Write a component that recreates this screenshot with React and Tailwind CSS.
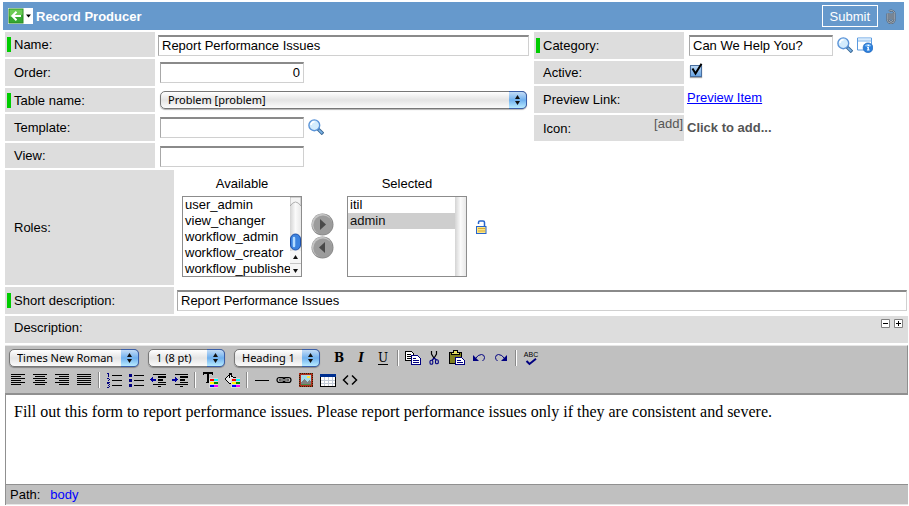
import React from "react";

const INPUT =
  "h-[21px] min-w-0 border border-t-2 border-[#d0d0d0] border-t-[#8a8a8a] border-l-[#a8a8a8] bg-white px-[3px] pb-px leading-4 text-black outline-none";

function FieldLabel({ htmlFor, required, children, className = "" }) {
  return (
    <div className={`flex shrink-0 items-center bg-[#dddddd] ${className}`}>
      {required ? (
        <span className="ml-0.5 mr-[3px] h-[15px] w-1 bg-[#00cc00]" />
      ) : (
        <span className="w-[9px]" />
      )}
      <label htmlFor={htmlFor}>{children}</label>
    </div>
  );
}

function Row({ id, label, required, height, children, className = "" }) {
  return (
    <div className={`flex ${height}`}>
      <FieldLabel htmlFor={id} required={required} className="w-[150px]">
        {label}
      </FieldLabel>
      <div className={`flex min-w-0 flex-1 items-start ${className}`}>{children}</div>
    </div>
  );
}

function PopupSelect({ id, label, options, className = "" }) {
  return (
    <div className={`relative h-[18px] ${className}`}>
      <select
        id={id}
        aria-label={label}
        className="block h-[18px] w-full appearance-none rounded-[5px] border border-[#777] bg-linear-to-b from-[#ffffff] via-[#e4e4e4] to-[#fbfbfb] pl-[7px] pr-5 font-['Noto_Sans',sans-serif] text-[11px] leading-4 text-black shadow-[0_1px_1px_rgba(0,0,0,0.3)] outline-none"
      >
        {options.map((o) => (
          <option key={o}>{o}</option>
        ))}
      </select>
      <span className="pointer-events-none absolute right-0 top-0 flex h-[18px] w-[18px] items-center justify-center rounded-r-[5px] border border-l-0 border-[#3a5ea8] bg-linear-to-b from-[#c3dcf6] via-[#6fb0ee] to-[#b9ecff]">
        <svg width="7" height="10" viewBox="0 0 7 10">
          <path d="M3.5 0L6 4H1zM3.5 10L6 6H1z" fill="#111" />
        </svg>
      </span>
    </div>
  );
}

function Magnifier() {
  return (
    <svg width="16" height="16" viewBox="0 0 16 16">
      <path d="M10 10l5 5" stroke="#35638f" strokeWidth="3.4" />
      <path d="M10.8 10.8l3.6 3.6" stroke="#7db3e6" strokeWidth="1.8" />
      <circle cx="6.3" cy="6.3" r="5.4" fill="#d3ecfd" stroke="#5b94d8" strokeWidth="1.4" />
      <path d="M3 6a3.5 3.5 0 0 1 3.6-3.2" fill="none" stroke="#fff" strokeWidth="1.6" />
    </svg>
  );
}

function InfoWindow() {
  return (
    <svg width="16" height="16" viewBox="0 0 16 16">
      <path d="M.5 1h14v12H.5z" fill="#fff" />
      <path d="M7 13H.5V1h14v6" fill="none" stroke="#5b9be0" />
      <path d="M1 1.500h13v2H1z" fill="#d6eafd" />
      <path d="M1 4h13.500" stroke="#7db3ec" />
      <circle cx="11" cy="10.800" r="4.900" fill="#2b7fdc" stroke="#1b5fb4" strokeWidth=".6" />
      <path d="M7.500 9a4 4 0 0 1 7 0q-3.500 1.500-7 0z" fill="#7fbcf5" />
      <path d="M10.600 7.700h1.600v1.400h-1.600zM10 9.900h1.900v2.700h.7v.9H9.900v-.9h.7v-1.800H10z" fill="#fff" />
    </svg>
  );
}

function Paperclip() {
  return (
    <svg width="10" height="15" viewBox="0 0 10 15" fill="none">
      <path
        d="M7 4v6.500a2 2 0 0 1-4 0V4M5 4.500v6M1.300 4.500v6a3.700 3.700 0 0 0 7.400 0V4.500a3.500 3.200 0 0 0-5.700-2.300"
        stroke="#4f5f70"
        strokeWidth="1.900"
      />
      <path
        d="M7 4v6.500a2 2 0 0 1-4 0V4M5 4.500v6M1.300 4.500v6a3.700 3.700 0 0 0 7.400 0V4.500a3.500 3.200 0 0 0-5.700-2.300"
        stroke="#c3cad2"
        strokeWidth=".7"
      />
    </svg>
  );
}

function Padlock() {
  return (
    <svg width="11" height="14" viewBox="0 0 11 14" fill="none">
      <path d="M2.500 4V2.500a1.500 1.500 0 0 1 1.500-1.500h3a1.500 1.500 0 0 1 1.500 1.500V7" stroke="#2765cc" strokeWidth="1.500" />
      <rect x=".5" y="6.500" width="9.500" height="7" fill="#ffe680" stroke="#2765cc" />
      <path d="M2 8.500h7M2 11h7" stroke="#d3a83a" />
    </svg>
  );
}

function MoveButton({ label, d }) {
  return (
    <button type="button" aria-label={label} className="block">
      <svg width="23" height="23" viewBox="0 0 23 23">
        <circle cx="11.500" cy="11.500" r="11" fill="#8b8b8b" />
        <circle cx="11" cy="11" r="10.200" fill="#c4c4c4" />
        <circle cx="12" cy="12" r="9.600" fill="#9c9c9c" />
        <path d={d} fill="#4a4a4a" />
      </svg>
    </button>
  );
}

function Expander({ label, d }) {
  return (
    <button type="button" aria-label={label} className="block">
      <svg width="9" height="9" viewBox="0 0 9 9">
        <path d="M.5.5h8v8h-8z" fill="#fff" stroke="#808080" />
        <path d={d} stroke="#000" />
      </svg>
    </button>
  );
}

function Tool({ label, children }) {
  return (
    <button type="button" aria-label={label} title={label} className="flex h-[22px] w-[22px] items-center justify-center">
      {children}
    </button>
  );
}

function Icon({ children }) {
  return (
    <svg width="16" height="16" viewBox="0 0 16 16" shapeRendering="crispEdges" fill="none">
      {children}
    </svg>
  );
}

function Separator() {
  return <span className="mx-[3px] h-4 w-0.5 border-l border-r border-l-[#8a8a8a] border-r-white" />;
}

const ALIGN = {
  "Justify Left": "M1 2.500h14M1 4.500h10M1 6.500h14M1 8.500h10M1 10.500h14M1 12.500h10",
  "Justify Center": "M1 2.500h14M3 4.500h10M1 6.500h14M3 8.500h10M1 10.500h14M3 12.500h10",
  "Justify Right": "M1 2.500h14M5 4.500h10M1 6.500h14M5 8.500h10M1 10.500h14M5 12.500h10",
  "Justify Full": "M1 2.500h14M1 4.500h14M1 6.500h14M1 8.500h14M1 10.500h14M1 12.500h14",
};

function Palette() {
  return (
    <>
      <path d="M7 6h9v10H7z" fill="#d8d8d8" />
      <path d="M8 7h4v2H8z" fill="#f00" />
      <path d="M12 7h4v2h-4z" fill="#0ff" />
      <path d="M8 10h4v2H8z" fill="#ff0" />
      <path d="M12 10h4v2h-4z" fill="#080" />
      <path d="M8 13h4v2H8z" fill="#00f" />
      <path d="M12 13h4v2h-4z" fill="#f0f" />
    </>
  );
}

function ScrollTrack({ thumb }) {
  return (
    <span className="h-full w-[11px] shrink-0 bg-linear-to-r from-[#d4d4d4] via-[#fafafa] to-[#e8e8e8]">
      {thumb && (
        <svg width="11" height="79" viewBox="0 0 11 79">
          <path d="M0 0h11v9Q5.500 1 0 9z" fill="#f4f4f4" stroke="#a0a0a0" strokeWidth=".8" />
          <rect x=".5" y="37" width="10" height="16" rx="5" fill="#3c83df" stroke="#1d4fa8" />
          <path d="M4 41v8" stroke="#b4dcff" strokeWidth="2.500" strokeLinecap="round" />
          <path d="M0 54h11v25H0z" fill="#f6f6f6" />
          <path d="M0 66.500h11" stroke="#c4c4c4" />
          <path d="M5.500 58L8 62H3zM5.500 76L8 72H3z" fill="#111" />
        </svg>
      )}
    </span>
  );
}

function ListBox({ id, title, options, thumb, selected }) {
  return (
    <div className="w-[120px]">
      <label htmlFor={id} className="block text-center">
        {title}
      </label>
      <div className="mt-[5px] flex h-[81px] overflow-hidden border border-[#8c8c8c] bg-white">
        <select
          id={id}
          multiple
          size="5"
          defaultValue={selected}
          className="block h-20 w-full min-w-0 flex-1 appearance-none overflow-hidden border-0 bg-white p-0 outline-none [scrollbar-width:none]"
        >
          {options.map((o) => (
            <option key={o} className="h-4 min-h-0 p-0 pl-0.5 leading-4">
              {o}
            </option>
          ))}
        </select>
        <ScrollTrack thumb={thumb} />
      </div>
    </div>
  );
}

export default function App() {
  return (
    <div className="bg-white pt-0.5 font-['Liberation_Sans',Arial,sans-serif] text-[13px] leading-[15px] text-black">
      <header className="ml-[3px] mr-[5px] flex h-7 items-center bg-[#6699cc]">
        <button type="button" aria-label="Back" className="ml-[5px] flex h-4 w-[25px] items-center bg-white">
          <svg width="25" height="16" viewBox="0 0 25 16">
            <rect x="1" y="1" width="14" height="14" fill="#35a832" stroke="#2a8a22" />
            <path d="M1.500 1.500h13v5q-6 3-13 2z" fill="#6ccb55" />
            <path d="M13 8H4.500M8.500 3.800L4.300 8l4.200 4.200" fill="none" stroke="#fff" strokeWidth="2" />
            <path d="M18 6.500h5L20.500 9.500z" fill="#000" />
          </svg>
        </button>
        <h1 className="ml-[3px] font-bold text-white">Record Producer</h1>
        <button type="button" className="ml-auto h-[22px] border border-white px-[7px] text-white">
          Submit
        </button>
        <button type="button" aria-label="Attachments" className="ml-2 mr-2">
          <Paperclip />
        </button>
      </header>

      <main className="mt-0.5 pl-[5px] pr-px">
        <div className="grid grid-cols-[524fr_371fr] items-start gap-x-[5px] pr-[3px]">
          <div className="flex min-w-0 flex-col gap-0.5">
            <Row id="name" label="Name:" required height="h-[25px]" className="pl-[3px] pt-[3px]">
              <input id="name" className={`${INPUT} w-full`} defaultValue="Report Performance Issues" />
            </Row>
            <Row id="order" label="Order:" height="h-[27px]" className="pl-[5px] pt-[3px]">
              <input id="order" className={`${INPUT} w-36 text-right`} defaultValue="0" />
            </Row>
            <Row id="table" label="Table name:" required height="h-6" className="pl-[5px] pr-0.5 pt-[3px]">
              <PopupSelect id="table" className="w-full" options={["Problem [problem]"]} />
            </Row>
            <Row id="template" label="Template:" height="h-[27px]" className="pl-[5px] pt-[3px]">
              <input id="template" className={`${INPUT} w-36`} />
              <button type="button" aria-label="Look up template" className="ml-1 mt-0.5">
                <Magnifier />
              </button>
            </Row>
            <Row id="view" label="View:" height="h-[25px]" className="pl-[5px] pt-[3px]">
              <input id="view" className={`${INPUT} w-36`} />
            </Row>
          </div>

          <div className="flex min-w-0 flex-col gap-0.5">
            <Row id="category" label="Category:" required height="h-[27px]" className="pl-[5px] pt-[3px]">
              <input id="category" className={`${INPUT} w-36`} defaultValue="Can We Help You?" />
              <button type="button" aria-label="Look up category" className="ml-1 mt-0.5">
                <Magnifier />
              </button>
              <button type="button" aria-label="Show category" className="ml-1 mt-0.5">
                <InfoWindow />
              </button>
            </Row>
            <Row id="active" label="Active:" height="h-[23px]" className="pl-[5px] pt-0.5">
              <span className="relative h-[15px] w-3.5">
                <input
                  id="active"
                  type="checkbox"
                  defaultChecked
                  className="peer ml-px mt-0.5 block h-3 w-3 appearance-none border border-[#4a6f9f] bg-linear-to-b from-[#b9d7f5] to-[#6aa5e3] shadow-[0_1px_1px_rgba(0,0,0,0.35)]"
                />
                <svg
                  width="14"
                  height="15"
                  viewBox="0 0 14 15"
                  className="pointer-events-none absolute left-0 top-0 hidden peer-checked:block"
                >
                  <path d="M3.500 5.500L6.500 10.500L12.500 .8" fill="none" stroke="#000" strokeWidth="2" />
                </svg>
              </span>
            </Row>
            <Row label="Preview Link:" height="h-[27px]" className="pl-[3px] pt-1">
              <a href="#preview" className="text-[#0000ff] underline">
                Preview Item
              </a>
            </Row>
            <div className="flex h-[26px]">
              <div className="flex w-[150px] shrink-0 items-start bg-[#dddddd]">
                <span className="self-center pl-[9px]">Icon:</span>
                <button type="button" className="ml-auto mr-px mt-px text-[#555555]">
                  [add]
                </button>
              </div>
              <div className="pl-[3px] pt-[5px]">
                <button type="button" className="block font-bold text-[#555555]">
                  Click to add...
                </button>
              </div>
            </div>
          </div>
        </div>

        <div className="mt-0.5 flex">
          <FieldLabel htmlFor="available" className="h-[115px] w-[169px]">
            Roles:
          </FieldLabel>
          <div className="flex pl-2 pt-1.5">
            <ListBox
              id="available"
              title="Available"
              thumb
              options={["user_admin", "view_changer", "workflow_admin", "workflow_creator", "workflow_publisher"]}
            />
            <div className="mt-[19px] flex h-[81px] w-[45px] flex-col items-center justify-center pr-1">
              <MoveButton label="Add role" d="M9 6l6 5.500L9 17z" />
              <MoveButton label="Remove role" d="M14 6l-6 5.500L14 17z" />
            </div>
            <ListBox id="selected" title="Selected" options={["itil", "admin"]} selected={["admin"]} />
            <button type="button" aria-label="Unlock" className="ml-[9px] mt-11 self-start">
              <Padlock />
            </button>
          </div>
        </div>

        <div className="mt-0.5 flex h-[27px]">
          <FieldLabel htmlFor="short" required className="w-[169px]">
            Short description:
          </FieldLabel>
          <div className="flex flex-1 items-start pl-[3px] pr-px pt-[3px]">
            <input id="short" className={`${INPUT} w-full`} defaultValue="Report Performance Issues" />
          </div>
        </div>

        <div className="mt-0.5 flex h-[27px] bg-[#dddddd]">
          <label htmlFor="description" className="self-center pb-1 pl-[9px]">
            Description:
          </label>
          <div className="ml-auto mr-[5px] mt-[3px] flex items-start gap-1">
            <Expander label="Shrink" d="M2 4.500h5" />
            <Expander label="Grow" d="M2 4.500h5M4.500 2v5" />
          </div>
        </div>

        <section className="mt-0.5">
          <div className="h-[49px] border-b border-r border-t border-[#909090] border-t-[#e6e6e6] bg-[#c0c0c0] pl-0.5 pt-px">
            <div className="flex h-[22px] items-center pl-0.5">
              <PopupSelect label="Font" className="w-[130px]" options={["Times New Roman"]} />
              <PopupSelect label="Font size" className="ml-[9px] w-[77px]" options={["1 (8 pt)"]} />
              <PopupSelect label="Format" className="ml-[9px] mr-2 w-[86px]" options={["Heading 1"]} />
              <Tool label="Bold">
                <span className="font-['DejaVu_Serif',serif] text-xs font-bold">B</span>
              </Tool>
              <Tool label="Italic">
                <span className="font-['DejaVu_Serif',serif] text-xs font-bold italic">I</span>
              </Tool>
              <Tool label="Underline">
                <span className="border-b border-black font-['DejaVu_Serif',serif] text-xs leading-3">U</span>
              </Tool>
              <Separator />
              <Tool label="Copy">
                <Icon>
                  <path d="M.5 1.500h6l2 2v7h-8z" fill="#fff" stroke="#000" />
                  <path d="M2 4.500h4M2 6.500h4M2 8.500h4" stroke="#000" />
                  <path d="M6.500 5.500h6l3 3v6h-9z" fill="#fff" stroke="#000080" />
                  <path d="M8 8.500h3M8 10.500h6M8 12.500h6" stroke="#000080" />
                </Icon>
              </Tool>
              <Tool label="Cut">
                <svg width="16" height="16" viewBox="0 0 16 16" fill="none">
                  <path d="M4.500 1v3l2.700 4.500M9.500 1v3L6.800 8.500" stroke="#000" strokeWidth="1.200" />
                  <path d="M7 8l-2 2.500M7 8l2.500 2" stroke="#000080" strokeWidth="1.300" />
                  <rect x="3" y="10.300" width="2.800" height="4" rx="1.300" stroke="#000080" strokeWidth="1.100" />
                  <rect x="8.500" y="9.800" width="2.800" height="4" rx="1.300" stroke="#000080" strokeWidth="1.100" />
                </svg>
              </Tool>
              <Tool label="Paste">
                <Icon>
                  <path d="M.5 2.500h12v11H.5z" fill="#808020" stroke="#000" />
                  <path d="M4.500.5h4v2h2v2h-8v-2h2z" fill="#e8e060" stroke="#000" />
                  <path d="M6.500 7.500h6l3 3v4h-9z" fill="#fff" stroke="#000080" />
                  <path d="M8 10.500h4M8 12.500h6" stroke="#000080" />
                </Icon>
              </Tool>
              <Tool label="Undo">
                <svg width="16" height="16" viewBox="0 0 16 16" fill="none">
                  <path d="M2 5v6h6z" fill="#000080" />
                  <path d="M4.500 8.500Q7 4.500 10.500 4.500Q13.500 4.700 13.500 7.500Q13.500 9.500 11.500 11" stroke="#000080" />
                </svg>
              </Tool>
              <Tool label="Redo">
                <svg width="16" height="16" viewBox="0 0 16 16" fill="none">
                  <path d="M14 5v6H8z" fill="#000080" />
                  <path d="M11.500 8.500Q9 4.500 5.500 4.500Q2.500 4.700 2.500 7.500Q2.500 9.500 4.500 11" stroke="#000080" />
                </svg>
              </Tool>
              <Separator />
              <Tool label="Spell check">
                <span className="flex flex-col items-center">
                  <span className="font-['Liberation_Sans',sans-serif] text-[7px] leading-[7px]">ABC</span>
                  <svg width="12" height="8" viewBox="0 0 12 8">
                    <path d="M1.500 3l3 3L11 .8" fill="none" stroke="#000080" strokeWidth="2" />
                  </svg>
                </span>
              </Tool>
            </div>

            <div className="flex h-[22px] items-center">
              {Object.entries(ALIGN).map(([name, d]) => (
                <Tool key={name} label={name}>
                  <Icon>
                    <path d={d} stroke="#000" />
                  </Icon>
                </Tool>
              ))}
              <Separator />
              <Tool label="Ordered List">
                <Icon>
                  <path d="M6 3.500h10M6 8.500h10M6 13.500h10" stroke="#000" />
                  <path
                    d="M1 1.500h1.500M2.500 1v4M1 6.500h2M3.500 7v1M2.500 8v1M1 10h3M1 11.500h2M3.500 12v1M2 13.500h1M3.500 14v1M1 15.500h2"
                    stroke="#000080"
                  />
                </Icon>
              </Tool>
              <Tool label="Bulleted List">
                <Icon>
                  <path d="M6 3.500h10M6 8.500h10M6 13.500h10" stroke="#000" />
                  <path d="M1 2h3v3H1zM1 7h3v3H1zM1 12h3v3H1z" fill="#000080" />
                </Icon>
              </Tool>
              <Tool label="Decrease Indent">
                <Icon>
                  <path d="M3 2.500h13M8 5h8M8 7.500h5M3 12.500h13M8 14.500h3" stroke="#000" />
                  <path d="M8 5h8M8 8h5M8 10.500h8" stroke="#000" strokeWidth="1.500" />
                  <path d="M0 7.500L3 4.500v2h3v2H3v2z" fill="#0000a0" />
                </Icon>
              </Tool>
              <Tool label="Increase Indent">
                <Icon>
                  <path d="M3 2.500h13M8 5h8M8 7.500h5M3 12.500h13M8 14.500h3" stroke="#000" />
                  <path d="M8 5h8M8 8h5M8 10.500h8" stroke="#000" strokeWidth="1.500" />
                  <path d="M6 7.500L3 4.500v2H0v2h3v2z" fill="#0000a0" />
                </Icon>
              </Tool>
              <Separator />
              <Tool label="Font Color">
                <Icon>
                  <path d="M1 0h10v3h-1V2H7v8h1v1H4v-1h1V2H2v1H1z" fill="#000" />
                  <Palette />
                </Icon>
              </Tool>
              <Tool label="Background Color">
                <Icon>
                  <path d="M1 7l5-5 5 5-5 5z" fill="#e8e8e8" stroke="#000" />
                  <path d="M5 6V1h2v4M10 5l3 2v2" stroke="#000" />
                  <Palette />
                </Icon>
              </Tool>
              <Separator />
              <Tool label="Horizontal Rule">
                <Icon>
                  <path d="M1 8.500h14" stroke="#000" />
                </Icon>
              </Tool>
              <Tool label="Insert Link">
                <svg width="16" height="16" viewBox="0 0 16 16" fill="none">
                  <rect x="1" y="5.500" width="8" height="5" rx="2.500" stroke="#000" strokeWidth="1.200" />
                  <rect x="7" y="5.500" width="8" height="5" rx="2.500" stroke="#000" strokeWidth="1.200" />
                  <path d="M3.500 8h9" stroke="#000" strokeWidth="2.600" />
                  <path d="M4.200 8h7.600" stroke="#fff" />
                </svg>
              </Tool>
              <Tool label="Insert Image">
                <Icon>
                  <path d="M1 1h14v14H1z" fill="#b03020" />
                  <path d="M1.500 1.500h13v13h-13z" stroke="#302000" strokeDasharray="1 1" />
                  <path d="M3 3h10v10H3z" fill="#a5dcea" />
                  <path d="M9 4h3v2H9z" fill="#ffe640" />
                  <path d="M3 13v-3l3-3 3 3 2-2 2 2v3z" fill="#808080" />
                  <path d="M3 12h10v1H3z" fill="#4a8a4a" />
                </Icon>
              </Tool>
              <Tool label="Insert Table">
                <Icon>
                  <path d="M.5 2.500h15v12H.5z" fill="#fff" stroke="#000" />
                  <path d="M0 2h16v3H0z" fill="#003090" />
                  <path d="M1 8.500h14M1 11.500h14M4.500 5v9M8.500 5v9M12.500 5v9" stroke="#c4ccd8" />
                </Icon>
              </Tool>
              <Tool label="Toggle HTML Source">
                <svg width="16" height="16" viewBox="0 0 16 16" fill="none">
                  <path d="M6 3.500L1.500 8 6 12.500M10 3.500l4.500 4.500-4.500 4.500" stroke="#000" strokeWidth="1.500" />
                </svg>
              </Tool>
            </div>
          </div>
          <div className="border-l border-t border-[#909090]">
            <textarea
              id="description"
              rows="4"
              className="block h-[89px] w-full resize-none bg-white px-2 py-2 font-['Liberation_Serif','Times_New_Roman',serif] text-base leading-[18px] outline-none"
              defaultValue="Fill out this form to report performance issues. Please report performance issues only if they are consistent and severe."
            />
            <footer className="flex h-[21px] items-center gap-2.5 border-b border-t border-b-[#e6e6e6] border-t-[#909090] bg-[#c0c0c0] pl-1">
              <span>Path:</span>
              <a href="#body" className="text-[#0000ff]">
                body
              </a>
            </footer>
          </div>
        </section>
      </main>
    </div>
  );
}
